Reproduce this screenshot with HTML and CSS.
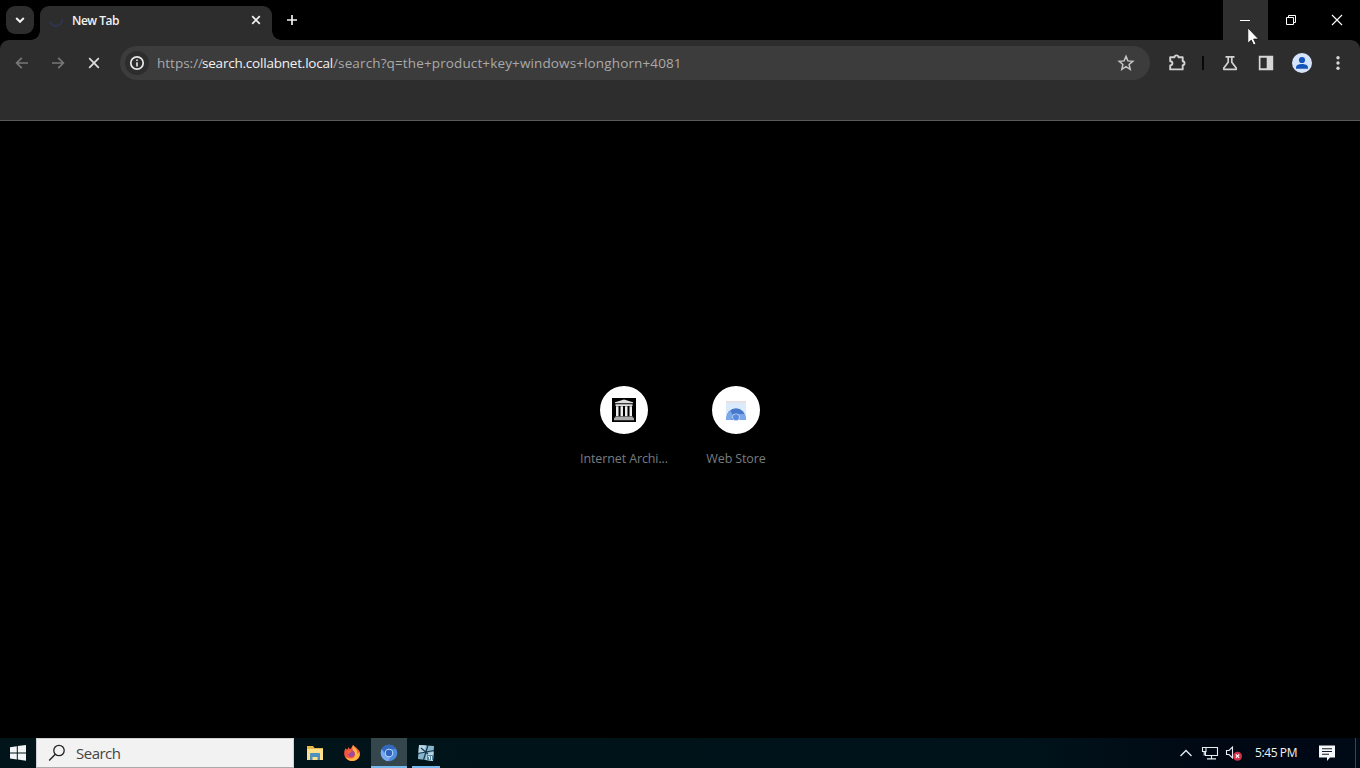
FILE: index.html
```html
<!DOCTYPE html>
<html lang="en">
<head>
<meta charset="utf-8">
<title>New Tab</title>
<link rel="stylesheet" href="styles.css">
</head>
<body>
<div class="screen">
  <header class="tabstrip">
    <div class="tab-search"><svg width="28" height="28" viewBox="0 0 28 28"><path class="line bright thick" d="M10.2 12l3.8 3.8 3.8-3.8"/></svg></div>
    <div class="tab">
      <svg class="spinner" width="16" height="16" viewBox="0 0 16 16"><path d="M1.8 9.5A6.5 6.5 0 0 0 14.4 7.5" fill="none" stroke="#303653" stroke-width="2"/></svg>
      <span class="tab-title">New Tab</span>
      <svg class="tab-close" width="16" height="16" viewBox="0 0 16 16"><path class="line bright" d="M4.2 4.2l7.6 7.6m0-7.6l-7.6 7.6"/></svg>
    </div>
    <svg class="new-tab" width="16" height="16" viewBox="0 0 16 16"><path class="line bright" d="M8 3v10M3 8h10"/></svg>
    <div class="window-controls">
      <div class="control minimize"><svg width="12" height="12" viewBox="0 0 12 12"><path d="M1 6.5h10" stroke="#fff"/></svg></div>
      <div class="control"><svg width="12" height="12" viewBox="0 0 12 12"><path d="M1.5 3.5h7v7h-7zM3.5 3V1.5h7v7H9" fill="none" stroke="#fff"/></svg></div>
      <div class="control"><svg width="12" height="12" viewBox="0 0 12 12"><path d="M1 1l10 10M11 1L1 11" stroke="#fff" stroke-width="1.1"/></svg></div>
    </div>
  </header>
  <div class="toolbar-back">
  <nav class="toolbar">
    <div class="nav-buttons">
      <svg width="16" height="16" viewBox="0 0 16 16"><path class="line dim" d="M14 8H2.8M7.8 2.8L2.6 8l5.2 5.2"/></svg>
      <svg width="16" height="16" viewBox="0 0 16 16"><path class="line dim" d="M2 8h11.2M8.2 2.8L13.4 8l-5.2 5.2"/></svg>
      <svg width="16" height="16" viewBox="0 0 16 16"><path class="line soft" d="M3.2 3.2l9.6 9.6m0-9.6l-9.6 9.6"/></svg>
    </div>
    <div class="omnibox">
      <div class="site-info"><svg width="16" height="16" viewBox="0 0 16 16"><circle cx="8" cy="8" r="6.2" fill="none" stroke="#e8e8e8" stroke-width="1.7"/><path d="M8 7.2v4.2M8 4.4v1.7" stroke="#e8e8e8" stroke-width="1.6"/></svg></div>
      <span class="url"><span class="scheme">https://</span><span class="host">search.collabnet.local</span><span class="path">/search?q=the+product+key+windows+longhorn+4081</span></span>
      <svg class="star" width="18" height="18" viewBox="0 0 18 18"><path d="M9 2.4l1.9 4.5 4.9.4-3.7 3.2 1.1 4.8L9 12.7l-4.2 2.6 1.1-4.8-3.7-3.2 4.9-.4z" fill="none" stroke="#c7c7c7" stroke-width="1.5"/></svg>
    </div>
    <div class="actions">
      <svg width="20" height="20" viewBox="0 0 20 20"><path d="M3.2 4.2h4.3c.2-2.4 3.8-2.4 4 0h4.2v4.1c2.4.2 2.4 3.8 0 4v4.1H3.2v-4c3-.2 3-4 0-4.2z" fill="none" stroke="#d2d2d2" stroke-width="1.9" stroke-linejoin="round"/></svg>
      <span class="divider"></span>
      <svg width="20" height="20" viewBox="0 0 20 20"><path d="M5.5 3.8h9M8.2 4v5.2L3.8 15v1.3h12.4V15l-4.4-5.8V4" fill="none" stroke="#d2d2d2" stroke-width="1.7" stroke-linejoin="round"/></svg>
      <svg width="20" height="20" viewBox="0 0 20 20"><path d="M2.8 2.8h14.4v14.4H2.8zM4.5 4.8v10.4h6.2V4.8z" fill="#d6d6d6" fill-rule="evenodd"/></svg>
      <svg width="20" height="20" viewBox="0 0 20 20"><circle cx="10" cy="10" r="10" fill="#d5e3fb"/><circle cx="10" cy="7" r="3.1" fill="#1455b8"/><path d="M4 15.8v-1.3c0-2.6 3-3.6 6-3.6s6 1 6 3.6v1.3z" fill="#1455b8"/></svg>
      <svg width="20" height="20" viewBox="0 0 20 20"><g fill="#d8d8d8"><circle cx="10" cy="4.7" r="1.7"/><circle cx="10" cy="10" r="1.7"/><circle cx="10" cy="15.3" r="1.7"/></g></svg>
    </div>
  </nav>
  </div>
  <main class="page">
    <div class="shortcut">
      <div class="disc"><svg width="24" height="24" viewBox="0 0 24 24"><path fill="#000" d="M0 0h24v24H0z"/><path fill="#ddd" d="M3 4.3L12 1.5l9 2.8v1H3zM3.5 6.3h17V8h-17z"/><path fill="#eee" d="M4 8.2h2.5v10H4zM8.5 8.2H11v10H8.5zM13 8.2h2.5v10H13zM17.5 8.2H20v10h-2.5z"/><path fill="#aaa" d="M3.2 18.5h17.6v1.3H22v2.4H2v-2.4h1.2z"/></svg></div>
      <span class="label archive">Internet Archi...</span>
    </div>
    <div class="shortcut">
      <div class="disc"><svg width="24" height="24" viewBox="0 0 24 24"><path fill="#eadfda" d="M2 3h20v3H2z"/><path fill="#dcebfb" d="M2 4.5h20V22H2z"/><path fill="#4778ca" d="M2.3 22v-2a9.7 9.7 0 0 1 19.4 0v2z"/><path fill="#7ca7e8" d="M2.3 22v-2c0-3 1.7-5.8 4-7.2L9 17.5 7.5 22zM14.5 16h6.4c1 2 .8 4 .8 6h-7z"/><circle cx="12" cy="19.2" r="3.8" fill="#bcd5f8"/><circle cx="12" cy="19.2" r="2.9" fill="#5a89d7"/></svg></div>
      <span class="label">Web Store</span>
    </div>
  </main>
  <footer class="taskbar">
    <div class="start"><svg width="18" height="18" viewBox="0 0 18 18"><path fill="#f2f6f8" d="M1 3.3l6.8-1v6.1H1zM8.8 2.1L17 1v7.4H8.8zM1 9.4h6.8v6.1L1 14.6zM8.8 9.4H17v7.4l-8.2-1.2z"/></svg></div>
    <div class="search"><svg width="18" height="18" viewBox="0 0 18 18"><circle cx="11" cy="6.5" r="5.2" fill="none" stroke="#222" stroke-width="1.3"/><path d="M7.3 10.3L1.2 16.5" stroke="#222" stroke-width="1.4"/></svg><span class="search-text">Search</span></div>
    <div class="apps">
      <div class="app"><svg width="18" height="18" viewBox="0 0 18 18"><path fill="#e5b849" d="M1 2h6l1.5 2H17v11H1z"/><path fill="#ffe08a" d="M1 5h16v11H1z"/><path fill="#4c91bf" d="M4 10.2c0-.8.4-1.2 1-1.2h8c.6 0 1 .4 1 1.2V16h-2.5v-3h-5v3H4z"/></svg></div>
      <div class="app"><svg width="18" height="18" viewBox="0 0 18 18"><path fill="#f5543d" d="M2.4 4.3l1.8 1.5L5.7 3l1 2.2C8 5 9 3 10 1c2 2 4 2.5 5.6 5 3.7 6-1 11-6.4 11C3 17-1 11 2.4 4.3z"/><path fill="#ffb53f" d="M10 1c1 3 5 4 4.5 9 2-1 1.3-3.5 1.1-4 3.1 6-1 11-6.4 11-3 0-5.7-2-6.7-4.5 4 3.5 9.5 2 9.5-2 0-3-4-4-2-9.5z"/><circle cx="8.5" cy="9.8" r="3.2" fill="#a1489d"/><path fill="#f4653a" d="M3.5 7c2-1 4-.3 5.6.5-2 .6-2 2-3.6 2.3z"/></svg></div>
      <div class="app active"><svg width="18" height="18" viewBox="0 0 18 18"><circle cx="9" cy="9" r="8.3" fill="#4e8ade"/><path fill="#77aaf0" d="M1.8 5A8.3 8.3 0 0 0 8 17.2l3-5.2-6-1z"/><path fill="#3268bc" d="M1.8 5A8.3 8.3 0 0 1 16.3 5H9L5.4 9z"/><circle cx="9" cy="9" r="4.3" fill="#b9d6fb"/><circle cx="9" cy="9" r="3.2" fill="#2c63bb"/></svg></div>
      <div class="app running"><svg width="18" height="18" viewBox="0 0 18 18"><path fill="#88b5ce" d="M2 1l15 1-1 15L1 15z"/><path fill="#b8d7e5" d="M2 1l7 .5L7 8 1.5 9zM10 9l6.6-1L16 17l-7-1z"/><path d="M1 9.5l15.8-3M11 1L6.5 16M4 4l7 6" stroke="#17384c" stroke-width="1.2"/><path fill="#5586a0" d="M10 11h6v5h-6z"/><path d="M11 12.5h1.5v3M14.5 12v4" stroke="#d9f1fb" fill="none"/></svg></div>
    </div>
    <div class="tray">
      <svg class="chevron" width="14" height="14" viewBox="0 0 14 14"><path d="M1.5 10L7 4.5l5.5 5.5" fill="none" stroke="#e9edf2" stroke-width="1.3"/></svg>
      <svg class="network" width="18" height="16" viewBox="0 0 18 16"><path d="M5 2.5h11.5v8H4.5V7M10.5 11v3M6 13.9h9M1.5 2.5H5v4H1.5zM3.2 6.5v4" fill="none" stroke="#e9edf2" stroke-width="1.1"/></svg>
      <svg class="volume" width="18" height="16" viewBox="0 0 18 16"><path d="M1.5 5.5H4L7.5 2v11L4 9.5H1.5z" fill="none" stroke="#e9edf2" stroke-width="1.1"/><circle cx="12.5" cy="11.2" r="4.5" fill="#cf2f48"/><path d="M10.8 9.5l3.4 3.4m0-3.4l-3.4 3.4" stroke="#fff" stroke-width="1.1"/></svg>
      <span class="clock">5:45 PM</span>
      <svg class="notice" width="18" height="18" viewBox="0 0 18 18"><path fill="#f5f7fa" d="M1 1.5h16v12h-5L9 17v-3.5H1z"/><path d="M4 4.7h10M4 7.5h10M4 10.3h7" stroke="#101b2a" stroke-width="1.1"/></svg>
      <span class="peek"></span>
    </div>
  </footer>
  <svg class="pointer" width="13" height="19" viewBox="0 0 13 19"><path d="M.8.8v15.5l3.5-3.2 2.3 5 2.4-1.1-2.3-4.9h4.9z" fill="#fff" stroke="#111" stroke-width=".8"/></svg>
</div>
</body>
</html>
```
FILE: styles.css
```css
body {
  margin: 0;
  background: #000;
  font-family: "Open Sans", "Noto Sans", sans-serif;
}
svg { display: block; flex: none; }
.screen {
  position: relative;
  display: flex;
  flex-direction: column;
  width: 1360px;
  height: 768px;
  overflow: hidden;
  white-space: nowrap;
}
.line { fill: none; stroke-width: 1.7; }
.bright { stroke: #f0f0f0; }
.soft { stroke: #dedede; }
.dim { stroke: #777; }
.thick { stroke-width: 2; }

.tabstrip { display: flex; height: 40px; box-sizing: border-box; }
.tab-search {
  width: 28px;
  height: 28px;
  margin: 6px 6px 0;
  border-radius: 9px;
  background: #2d2d2d;
}
.tab {
  position: relative;
  display: flex;
  align-items: center;
  box-sizing: border-box;
  width: 232px;
  height: 34px;
  margin-top: 6px;
  padding: 0 8px 6px;
  border-radius: 9px 9px 0 0;
  background: #2d2d2d;
}
.tab::before, .tab::after {
  content: "";
  position: absolute;
  bottom: 0;
  width: 9px;
  height: 9px;
}
.tab::before { left: -9px; background: radial-gradient(circle at 0 0, transparent 8.5px, #2d2d2d 9px); }
.tab::after { right: -9px; background: radial-gradient(circle at 100% 0, transparent 8.5px, #2d2d2d 9px); }
.tab-title {
  flex: 1;
  margin-left: 8px;
  padding-top: 1px;
  color: #f2f2f2;
  font-size: 12px;
  font-weight: 600;
  letter-spacing: -.5px;
}
.new-tab { margin: 12px 0 0 12px; }
.window-controls { display: flex; margin-left: auto; }
.control {
  display: flex;
  align-items: center;
  justify-content: center;
  width: 46px;
  height: 40px;
}
.minimize { box-sizing: border-box; width: 45px; padding-right: 1px; background: #2f2f2f; }

.toolbar-back { background: #000; }
.toolbar {
  display: flex;
  align-items: flex-start;
  box-sizing: border-box;
  height: 81px;
  padding: 6px 12px 0 14px;
  border-bottom: 1px solid #5a5a5a;
  border-radius: 9px 9px 0 0;
  background: #2d2d2d;
}
.nav-buttons, .actions { display: flex; align-items: center; height: 34px; }
.nav-buttons { gap: 20px; }
.omnibox {
  display: flex;
  flex: none;
  align-items: center;
  box-sizing: border-box;
  width: 1030px;
  height: 34px;
  margin-left: 18px;
  padding: 0 15px 0 5px;
  border-radius: 17px;
  background: #3c3c3c;
}
.site-info { padding: 4px; border-radius: 50%; background: #2d2d2d; }
.url { display: flex; flex: 1; margin-left: 8px; font-size: 13.5px; color: #aaa; }
.scheme { width: 45px; }
.host { width: 131px; color: #f2f2f2; letter-spacing: -.21px; }
.path { letter-spacing: .13px; }
.actions { margin-left: 17px; gap: 16px; }
.divider { width: 2px; height: 14px; margin: 0 0 0 -1px; background: #080808; }

.page { display: flex; flex: 1; justify-content: center; }
.shortcut {
  display: flex;
  flex-direction: column;
  align-items: center;
  width: 112px;
  padding-top: 265px;
}
.disc {
  display: flex;
  align-items: center;
  justify-content: center;
  width: 48px;
  height: 48px;
  border-radius: 50%;
  background: #fff;
}
.label { margin-top: 16px; color: #777c80; font-size: 12.5px; line-height: 18px; letter-spacing: -.12px; }

.taskbar {
  display: flex;
  height: 30px;
  background: linear-gradient(90deg, #001419, #00131a 75%, #000814 90%, #000916);
}
.start { display: flex; align-items: center; justify-content: center; width: 36px; }
.search {
  display: flex;
  align-items: center;
  box-sizing: border-box;
  width: 258px;
  padding-left: 11px;
  border: 1px solid #d0d0d0;
  border-bottom-color: #aaa;
  background: #f2f2f2;
}
.search-text { margin-left: 10px; color: #444; font-size: 15px; letter-spacing: -.5px; }
.apps { display: flex; margin-left: 3px; gap: 1px; }
.app {
  display: flex;
  align-items: center;
  justify-content: center;
  box-sizing: border-box;
  width: 36px;
  height: 30px;
  border-bottom: 2px solid transparent;
}
.app svg { margin-top: 2px; }
.active { border-color: #76b9ed; background: #35474d; }
.running { width: 28px; margin-left: 4px; border-color: #76b9ed; }
.tray { display: flex; align-items: center; margin-left: auto; }
.network { margin-left: 8px; }
.volume { margin-left: 6px; }
.clock { width: 42px; margin-left: 12px; padding-bottom: 1px; color: #f0f3f6; font-size: 12px; letter-spacing: -.4px; }
.notice { margin-left: 21px; }
.peek { width: 1px; height: 30px; margin: 0 4px 0 19px; background: #3c4350; }
.pointer { position: absolute; left: 1247px; top: 27px; }
```
